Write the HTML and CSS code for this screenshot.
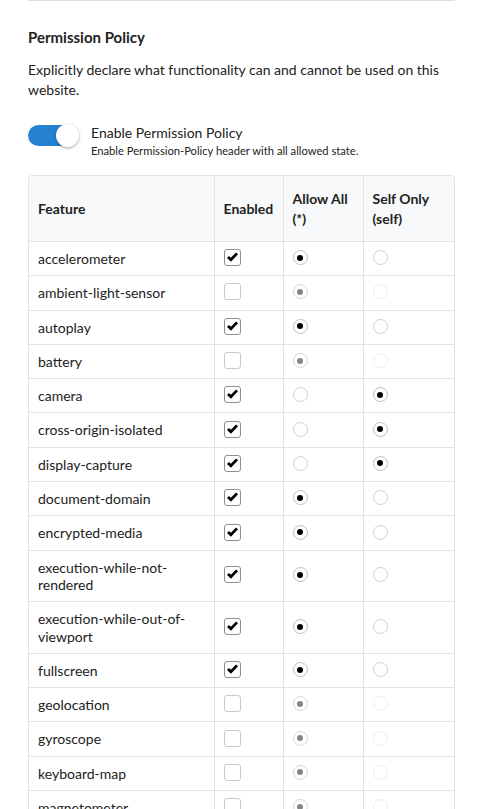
FILE: index.html
```html
<!DOCTYPE html>
<html>
<head>
<meta charset="utf-8">
<link rel="stylesheet" href="styles.css">
</head>
<body>
<div class="page">
  <hr class="rule">
  <h2 class="title">Permission Policy</h2>
  <p class="desc">Explicitly declare what functionality can and cannot be used on this website.</p>
  <div class="switch-row">
    <span class="switch"><span class="knob"></span></span>
    <div class="switch-text">
      <div class="switch-label">Enable Permission Policy</div>
      <div class="switch-help">Enable Permission-Policy header with all allowed state.</div>
    </div>
  </div>
  <div class="table-wrap">
    <table class="ptable">
      <colgroup>
        <col class="c1"><col class="c2"><col class="c3"><col class="c4">
      </colgroup>
      <thead>
        <tr><th>Feature</th><th>Enabled</th><th>Allow All (*)</th><th>Self Only (self)</th></tr>
      </thead>
      <tbody id="rows"></tbody>
    </table>
  </div>
</div>
<script src="app.js"></script>
</body>
</html>
```
FILE: app.js
```js
var data = [
  ["accelerometer", 1, "all"],
  ["ambient-light-sensor", 0, "all"],
  ["autoplay", 1, "all"],
  ["battery", 0, "all"],
  ["camera", 1, "self"],
  ["cross-origin-isolated", 1, "self"],
  ["display-capture", 1, "self"],
  ["document-domain", 1, "all"],
  ["encrypted-media", 1, "all"],
  ["execution-while-not-rendered", 1, "all"],
  ["execution-while-out-of-viewport", 1, "all"],
  ["fullscreen", 1, "all"],
  ["geolocation", 0, "all"],
  ["gyroscope", 0, "all"],
  ["keyboard-map", 0, "all"],
  ["magnetometer", 0, "all"],
  ["microphone", 0, "all"],
  ["midi", 0, "all"]
];
var check = '<svg viewBox="0 0 16 16" width="15" height="15"><path d="M3.2 7.4 L6.3 10.4 L12.8 3.6" fill="none" stroke="#000" stroke-width="3" stroke-linecap="butt" stroke-linejoin="miter"/></svg>';
var html = "";
data.forEach(function (r) {
  var en = r[1] ? "" : " off";
  html += "<tr><td>" + r[0] + "</td>" +
    '<td><span class="cb' + (r[1] ? " on" : "") + '">' + (r[1] ? check : "") + "</span></td>" +
    '<td><span class="rd' + en + (r[2] === "all" ? " sel" : "") + '"></span></td>' +
    '<td><span class="rd' + en + (r[2] === "self" ? " sel" : "") + '"></span></td></tr>';
});
document.getElementById("rows").innerHTML = html;
```
FILE: styles.css
```css
* { box-sizing: border-box; }
body {
  margin: 0;
  font-family: Lato, "Open Sans", sans-serif;
  color: #222;
  background: #fff;
}
.page { padding: 0 28px; }
.rule {
  margin: 0;
  border: 0;
  border-top: 1px solid #dcdcdc;
}
.title {
  margin: 26px 0 0;
  font-size: 15px;
  font-weight: 700;
  line-height: 20px;
}
.desc {
  margin: 13px 0 0;
  font-size: 14px;
  line-height: 20px;
}
.switch-row {
  display: flex;
  align-items: flex-start;
  gap: 13px;
  margin-top: 23px;
}
.switch {
  position: relative;
  width: 50px;
  height: 21px;
  margin-top: 2px;
  border-radius: 11px;
  background: #2582d2;
  flex: none;
}
.knob {
  position: absolute;
  right: -1px;
  top: -1px;
  width: 23px;
  height: 23px;
  border-radius: 50%;
  background: #fff;
  box-shadow: 0 1px 3px rgba(0,0,0,0.35);
}
.switch-label { font-size: 14px; line-height: 20px; }
.switch-help { font-size: 11.2px; line-height: 16px; }
.table-wrap {
  margin-top: 16px;
  border: 1px solid #e3e3e3;
  border-radius: 4px;
  overflow: hidden;
}
.ptable {
  width: 100%;
  border-collapse: collapse;
  table-layout: fixed;
  font-size: 14px;
}
.c1 { width: 185px; }
.c2 { width: 69px; }
.c3 { width: 80px; }
.ptable th {
  background: #f8f9fa;
  text-align: left;
  font-weight: 700;
  line-height: 20px;
  padding: 13px 9px 12px;
  vertical-align: middle;
}
.ptable td {
  line-height: 17.3px;
  padding: 8px 9px;
  vertical-align: middle;
}
.ptable th, .ptable td {
  border-right: 1px solid #e3e3e3;
  border-bottom: 1px solid #e3e3e3;
}
.ptable th:last-child, .ptable td:last-child { border-right: 0; }
.cb {
  display: block;
  width: 17px;
  height: 17px;
  border: 1px solid #c8c8c8;
  border-radius: 3px;
  background: #fff;
  margin-top: -2px;
}
.cb.on { border-color: #8f8f8f; }
.cb svg { display: block; margin: 0; }
.rd {
  display: block;
  width: 15px;
  height: 15px;
  border-radius: 50%;
  border: 1px solid #d0d0d0;
  position: relative;
  margin-top: -2px;
}
.rd.off { border-color: #ececec; }
.rd.sel { border-color: #bdbdbd; }
.rd.sel::after {
  content: "";
  position: absolute;
  left: 3.5px;
  top: 3.5px;
  width: 6px;
  height: 6px;
  border-radius: 50%;
  background: #000;
}
.rd.off.sel { border-color: #d6d6d6; }
.rd.off.sel::after { background: #858585; }
```
